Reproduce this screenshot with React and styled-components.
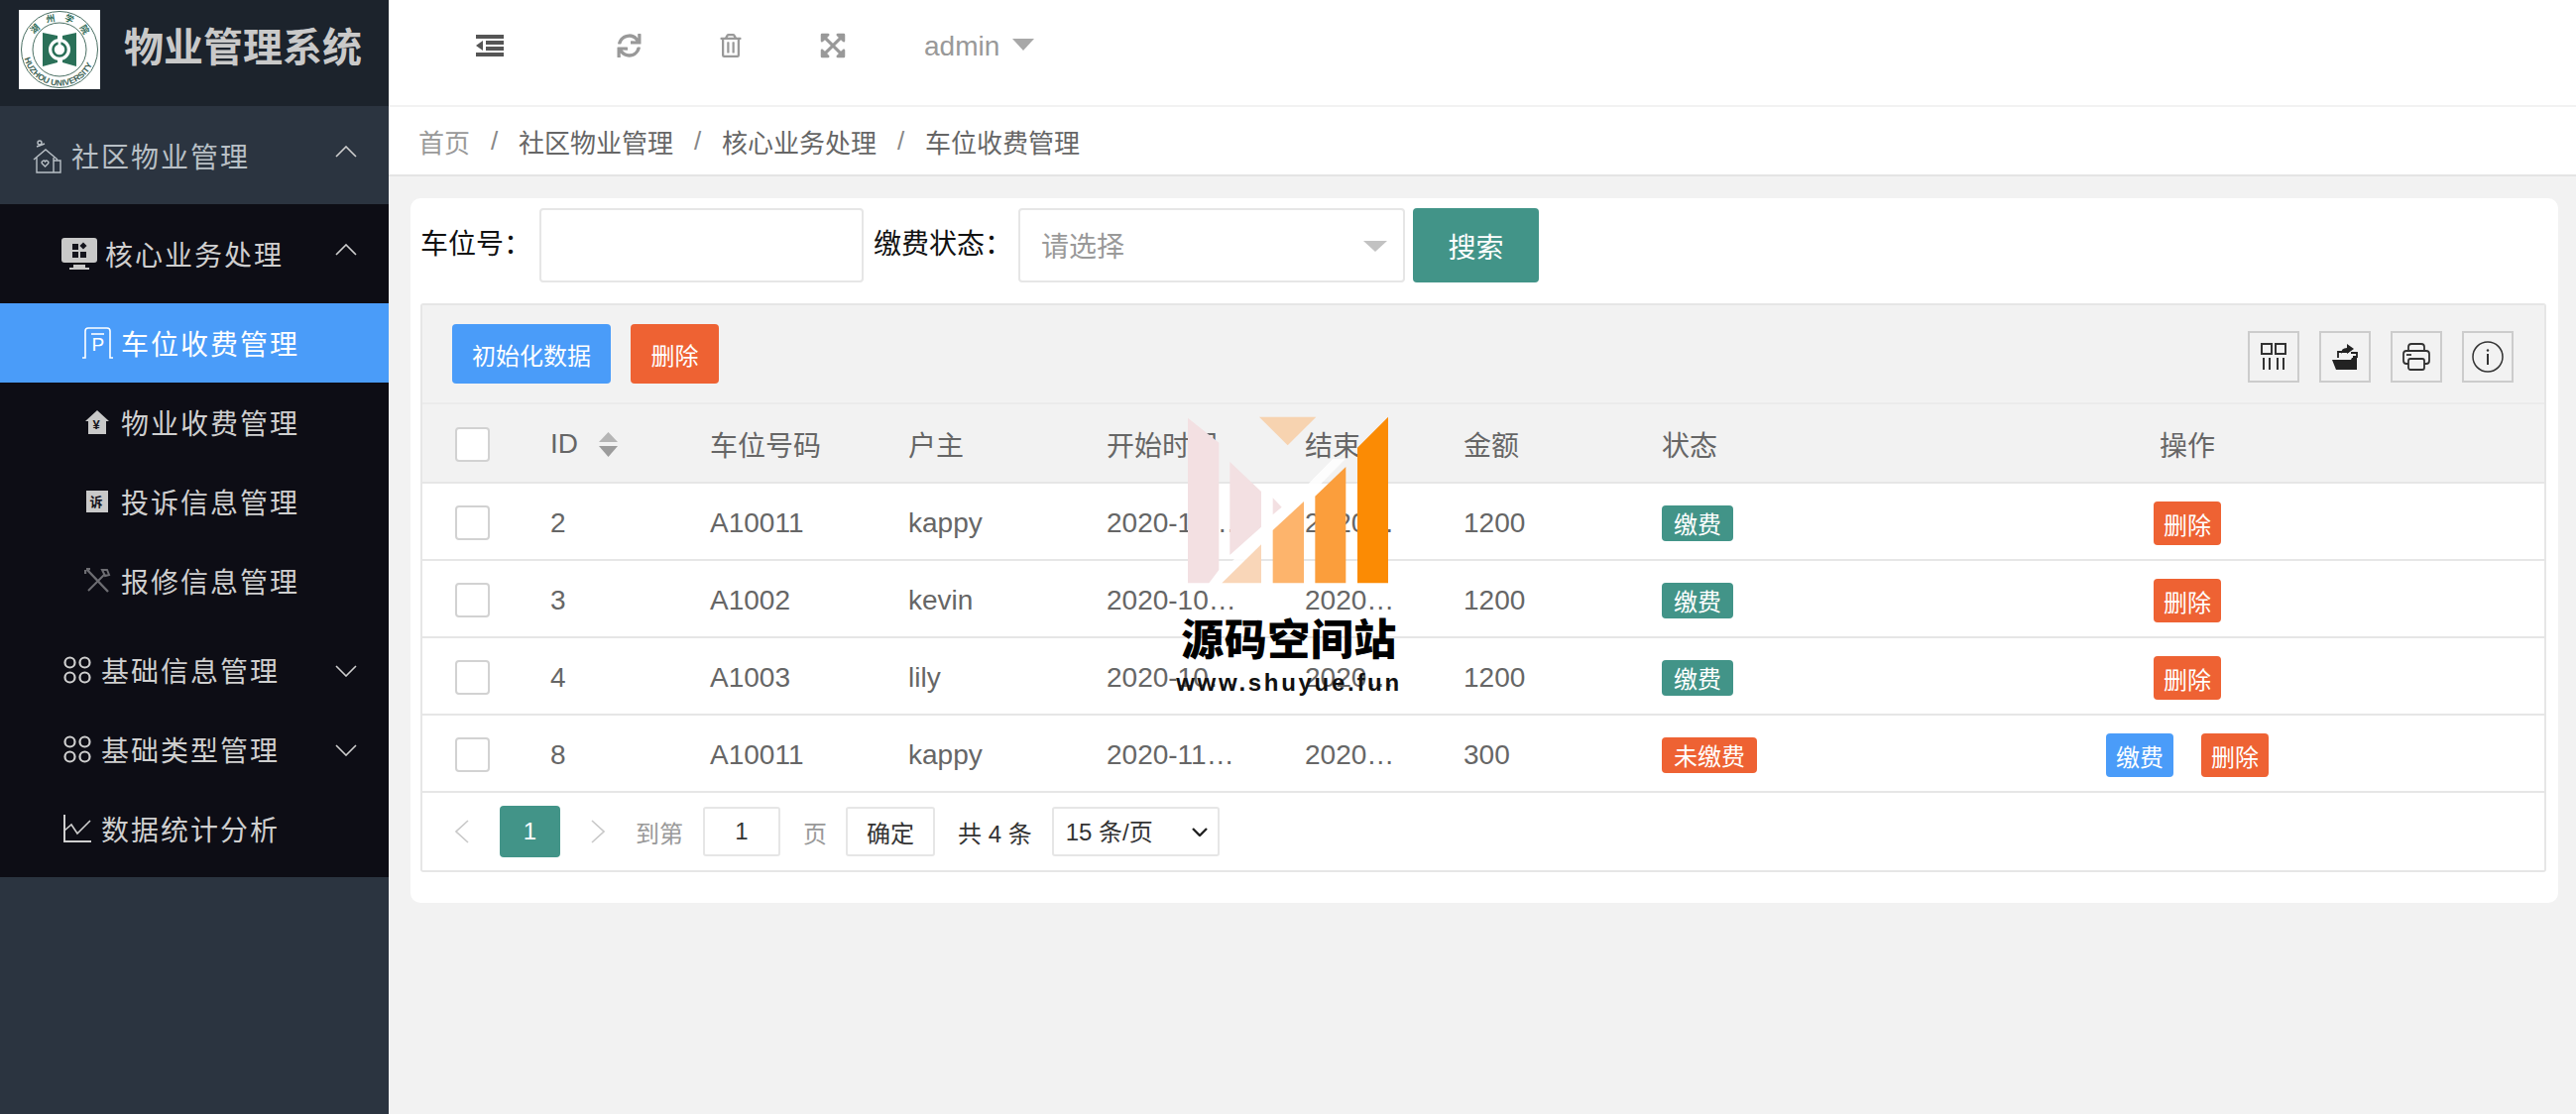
import React from 'react';
import styled, { createGlobalStyle } from 'styled-components';
import { FaSync, FaRegTrashAlt, FaExpandArrowsAlt } from 'react-icons/fa';

const rows = [
  { id: 2, code: 'A10011', owner: 'kappy', start: '2020-10-11 12:00:00', end: '2020-10-18 12:00:00', money: 1200, paid: true },
  { id: 3, code: 'A1002', owner: 'kevin', start: '2020-10-11 12:00:00', end: '2020-10-18 12:00:00', money: 1200, paid: true },
  { id: 4, code: 'A1003', owner: 'lily', start: '2020-10-11 12:00:00', end: '2020-10-18 12:00:00', money: 1200, paid: true },
  { id: 8, code: 'A10011', owner: 'kappy', start: '2020-11-02 12:00:00', end: '2020-11-09 12:00:00', money: 300, paid: false },
];

const Chevron = ({ up }) => (
  <ChevronSvg viewBox="0 0 22 12" $up={up}>
    <polyline points={up ? '1,11 11,1 21,11' : '1,1 11,11 21,1'} />
  </ChevronSvg>
);

const SchoolLogo = () => (
  <svg viewBox="0 0 82 80" width="82" height="80">
    <rect width="82" height="80" fill="#fff" />
    <defs>
      <path id="ringTop" d="M12 40 A29 29 0 0 1 70 40" />
      <path id="ringBottom" d="M4.5 40 A36.5 36.5 0 0 0 77.5 40" />
    </defs>
    <circle cx="41" cy="40" r="38.5" fill="none" stroke="#4a6f63" strokeWidth="1" />
    <circle cx="41" cy="40" r="27" fill="none" stroke="#4a6f63" strokeWidth="1" />
    <text fontFamily="Noto Sans CJK SC" fontSize="9" fontWeight="700" fill="#2f6b57" letterSpacing="8">
      <textPath href="#ringTop" startOffset="17%">湖州学院</textPath>
    </text>
    <text fontFamily="Liberation Sans" fontSize="8.5" fontWeight="700" fill="#3b5f54">
      <textPath href="#ringBottom" startOffset="8%">HUZHOU UNIVERSITY</textPath>
    </text>
    <path d="M24 23 L39 26 V53 L24 57 Z M44 26 L58 23 V57 L44 53 Z" fill="#2a7058" />
    <circle cx="41" cy="40" r="11" fill="#fff" />
    <circle cx="41" cy="40" r="6.5" fill="none" stroke="#2a7058" strokeWidth="2.6" />
    <rect x="39.6" y="30" width="2.8" height="6" fill="#fff" />
  </svg>
);

const HouseIcon = () => (
  <svg viewBox="0 0 29 36" width="29" height="36" fill="none" stroke="#b9c0c6" strokeWidth="1.4">
    <circle cx="7" cy="5" r="2" />
    <path d="M4 9 L12 6 M1 22 L13 12 L25 22 M4 20 V35 H28 V23 H21 M21 20 V35" />
    <path d="M12.5 29 L9.5 26 A1.8 1.8 0 0 1 12.5 24 A1.8 1.8 0 0 1 15.5 26 Z" />
  </svg>
);

const MonitorIcon = () => (
  <svg viewBox="0 0 36 32" width="36" height="32">
    <rect width="36" height="25" rx="3" fill="#c9c9c9" />
    <path d="M12 27 H24 V30 H28 V32 H8 V30 H12 Z" fill="#c9c9c9" />
    <rect x="11" y="6" width="6" height="6" fill="#14141c" />
    <rect x="11" y="14" width="6" height="6" fill="#14141c" />
    <rect x="19" y="14" width="6" height="6" fill="#14141c" />
    <rect x="19.5" y="5.5" width="5" height="5" fill="#14141c" transform="rotate(45 22 8)" />
  </svg>
);

const ParkingIcon = () => (
  <svg viewBox="0 0 32 32" width="32" height="32" fill="none" stroke="#fff" strokeWidth="1.6">
    <path d="M1 31 H4 V4 Q4 1 7 1 H26 Q29 1 29 4 V31 H32" />
    <path d="M10 7 H23" />
    <text x="10.5" y="24" fontFamily="Liberation Sans" fontSize="19" fill="#fff" stroke="none">P</text>
  </svg>
);

const FeeIcon = () => (
  <svg viewBox="0 0 26 26" width="26" height="26">
    <path d="M13 1 L25 12 H22 V25 H4 V12 H1 Z" fill="#c9c9c9" />
    <text x="13" y="20" textAnchor="middle" fontFamily="Liberation Sans" fontWeight="700" fontSize="13" fill="#14141c">¥</text>
  </svg>
);

const ComplaintIcon = () => (
  <svg viewBox="0 0 22 22" width="22" height="22">
    <rect width="22" height="22" fill="#c9c9c9" />
    <text x="11" y="16" textAnchor="middle" fontFamily="Noto Sans CJK SC" fontWeight="700" fontSize="13" fill="#14141c">诉</text>
  </svg>
);

const ToolsIcon = () => (
  <svg viewBox="0 0 27 26" width="27" height="26" fill="none" stroke="#6d6d72" strokeWidth="2.4">
    <path d="M3 2 L24 24 M2 1 L6 1 M1 2 L1 6" />
    <path d="M4 23 L21 6 M18 2 L23 2 L25 7 L21 8 Z" strokeWidth="2" />
  </svg>
);

const CirclesIcon = () => (
  <svg viewBox="0 0 28 28" width="28" height="28" fill="none" stroke="#cfcfcf" strokeWidth="2.2">
    <circle cx="6.5" cy="6.5" r="5" />
    <circle cx="21.5" cy="6.5" r="5" />
    <circle cx="6.5" cy="21.5" r="5" />
    <circle cx="21.5" cy="21.5" r="5" />
  </svg>
);

const ChartIcon = () => (
  <svg viewBox="0 0 28 28" width="28" height="28" fill="none" stroke="#cfcfcf" strokeWidth="2">
    <path d="M1 0 V27 H28" />
    <path d="M1 16 L8 10 L14 19 L27 6" strokeWidth="1.6" />
  </svg>
);

const OutdentIcon = () => (
  <svg viewBox="0 0 28 22" width="28" height="22" fill="#555">
    <rect width="28" height="4" />
    <rect x="10" y="6" width="18" height="4" />
    <rect x="10" y="12" width="18" height="4" />
    <rect y="18" width="28" height="4" />
    <polygon points="7,6 0,11 7,16" />
  </svg>
);

const ColumnsIcon = () => (
  <svg viewBox="0 0 26 28" width="26" height="28" fill="none" stroke="#333" strokeWidth="2">
    <rect x="1" y="1" width="10" height="10" />
    <rect x="15" y="1" width="10" height="10" />
    <path d="M3 15 V27 M9 15 V27 M17 15 V27 M23 15 V27" />
  </svg>
);

const ExportIcon = () => (
  <svg viewBox="0 0 26 28" width="26" height="28">
    <path d="M0 17 H19 L20 15 H25 V27 H4 Z" fill="#222" />
    <path d="M6 15 V9 H17 M19 10 H25 V14 H21" fill="none" stroke="#222" strokeWidth="1.8" />
    <path d="M9 11 Q9 5 15 5 V1 L22 6 L15 11 V8 Q11 8 9 11 Z" fill="#222" />
  </svg>
);

const PrintIcon = () => (
  <svg viewBox="0 0 28 28" width="28" height="28" fill="none" stroke="#333" strokeWidth="1.8">
    <path d="M6 8 V4 Q6 1 9 1 H19 Q22 1 22 4 V8" />
    <path d="M6 21 H4 Q1 21 1 18 V11 Q1 8 4 8 H24 Q27 8 27 11 V18 Q27 21 24 21 H22" />
    <rect x="6" y="16" width="16" height="11" rx="2" />
    <path d="M4 12 H9" />
  </svg>
);

const InfoIcon = () => (
  <svg viewBox="0 0 32 32" width="32" height="32" fill="none" stroke="#333" strokeWidth="1.5">
    <circle cx="16" cy="16" r="15" />
    <path d="M16 13 V24" strokeWidth="2" />
    <circle cx="16" cy="9.5" r="1.2" fill="#333" stroke="none" />
  </svg>
);

const SortIcon = () => (
  <svg viewBox="0 0 19 25" width="19" height="25">
    <path d="M9.5 0 L19 10 H0 Z" fill="#b5b5b5" />
    <path d="M0 14 H19 L9.5 25 Z" fill="#9c9c9c" />
  </svg>
);

const PageArrow = ({ left }) => (
  <PageArrowSvg viewBox="0 0 14 24" $left={left}>
    <polyline points={left ? '13,1 1,12 13,23' : '1,1 13,12 1,23'} />
  </PageArrowSvg>
);

const App = () => (
  <Page>
    <GlobalStyle />
    <Sidebar>
      <Brand>
        <SchoolLogo />
        <BrandTitle>物业管理系统</BrandTitle>
      </Brand>
      <Nav>
        <MenuRow $h={99} $indent={33} $bg="#2b3440" $color="#b9c0c6">
          <MenuIcon $w={29}><HouseIcon /></MenuIcon>
          社区物业管理
          <Chevron up />
        </MenuRow>
        <SubList>
          <MenuRow $h={100} $indent={62} $gap={8}>
            <MenuIcon $w={36}><MonitorIcon /></MenuIcon>
            核心业务处理
            <Chevron up />
          </MenuRow>
          <MenuRow $indent={82} $gap={8} $bg="#4a9cf9" $color="#fff">
            <MenuIcon $w={32}><ParkingIcon /></MenuIcon>
            车位收费管理
          </MenuRow>
          <MenuRow $indent={82} $gap={8}>
            <MenuIcon $w={32}><FeeIcon /></MenuIcon>
            物业收费管理
          </MenuRow>
          <MenuRow $indent={82} $gap={8}>
            <MenuIcon $w={32}><ComplaintIcon /></MenuIcon>
            投诉信息管理
          </MenuRow>
          <MenuRow $indent={82} $gap={8}>
            <MenuIcon $w={32}><ToolsIcon /></MenuIcon>
            报修信息管理
          </MenuRow>
        </SubList>
        <MenuRow $indent={64}>
          <MenuIcon $w={28}><CirclesIcon /></MenuIcon>
          基础信息管理
          <Chevron />
        </MenuRow>
        <MenuRow $indent={64}>
          <MenuIcon $w={28}><CirclesIcon /></MenuIcon>
          基础类型管理
          <Chevron />
        </MenuRow>
        <MenuRow $indent={64}>
          <MenuIcon $w={28}><ChartIcon /></MenuIcon>
          数据统计分析
        </MenuRow>
      </Nav>
    </Sidebar>

    <Main>
      <TopBar>
        <TopIcon $w={28} $ml={0} $color="#555"><OutdentIcon /></TopIcon>
        <TopIcon $w={25} $ml={114}><FaSync /></TopIcon>
        <TopIcon $w={22} $ml={79}><FaRegTrashAlt /></TopIcon>
        <TopIcon $w={24} $h={28} $ml={80}><FaExpandArrowsAlt /></TopIcon>
        <UserName>admin</UserName>
        <UserCaret />
      </TopBar>
      <Breadcrumb>
        <Crumb $color="#999">首页</Crumb>
        <CrumbSep>/</CrumbSep>
        <Crumb>社区物业管理</Crumb>
        <CrumbSep>/</CrumbSep>
        <Crumb>核心业务处理</Crumb>
        <CrumbSep>/</CrumbSep>
        <Crumb>车位收费管理</Crumb>
      </Breadcrumb>

      <Content>
        <Card>
          <SearchRow>
            <SearchLabel $w={120}>车位号：</SearchLabel>
            <SearchInput $w={327} />
            <SearchLabel $w={146} $ml={10}>缴费状态：</SearchLabel>
            <SelectBox>
              <SearchInput $w={390} placeholder="请选择" readOnly />
              <SelectCaret />
            </SelectBox>
            <SearchButton>搜索</SearchButton>
          </SearchRow>

          <TableFrame>
            <Toolbar>
              <ToolButton $bg="#4a9cf9" $w={160}>初始化数据</ToolButton>
              <ToolButton $bg="#ee6233" $w={89}>删除</ToolButton>
              <ToolRight>
                <IconBox><ColumnsIcon /></IconBox>
                <IconBox><ExportIcon /></IconBox>
                <IconBox><PrintIcon /></IconBox>
                <IconBox><InfoIcon /></IconBox>
              </ToolRight>
            </Toolbar>

            <DataTable>
              <colgroup>
                <col width="104" />
                <col width="161" />
                <col width="200" />
                <col width="200" />
                <col width="200" />
                <col width="160" />
                <col width="200" />
                <col width="195" />
                <col />
              </colgroup>
              <thead>
                <tr>
                  <HeadCell $first><Check type="checkbox" /></HeadCell>
                  <HeadCell><IdHead>ID<SortIcon /></IdHead></HeadCell>
                  <HeadCell>车位号码</HeadCell>
                  <HeadCell>户主</HeadCell>
                  <HeadCell>开始时间</HeadCell>
                  <HeadCell><Clip $w={95}>结束时间</Clip></HeadCell>
                  <HeadCell>金额</HeadCell>
                  <HeadCell>状态</HeadCell>
                  <HeadCell $center>操作</HeadCell>
                </tr>
              </thead>
              <tbody>
                {rows.map((row) => (
                  <tr key={row.id}>
                    <BodyCell $first><Check type="checkbox" /></BodyCell>
                    <BodyCell>{row.id}</BodyCell>
                    <BodyCell>{row.code}</BodyCell>
                    <BodyCell>{row.owner}</BodyCell>
                    <BodyCell><Clip $w={138}>{row.start}</Clip></BodyCell>
                    <BodyCell><Clip $w={95}>{row.end}</Clip></BodyCell>
                    <BodyCell>{row.money}</BodyCell>
                    <BodyCell>
                      <StatusTag $bg={row.paid ? '#429488' : '#ee6233'}>{row.paid ? '缴费' : '未缴费'}</StatusTag>
                    </BodyCell>
                    <BodyCell>
                      <Actions>
                        {!row.paid && <ActionButton $bg="#4a9cf9">缴费</ActionButton>}
                        <ActionButton $bg="#ee6233">删除</ActionButton>
                      </Actions>
                    </BodyCell>
                  </tr>
                ))}
              </tbody>
            </DataTable>

            <Pager>
              <PageArrow left />
              <PageCurrent>1</PageCurrent>
              <PageArrow />
              <PageText $ml={31} $color="#999">到第</PageText>
              <PageInput defaultValue="1" />
              <PageText $ml={23} $color="#999">页</PageText>
              <PageConfirm>确定</PageConfirm>
              <PageText $ml={23} $color="#333">共 4 条</PageText>
              <PageSelectBox>
                <PageSelect defaultValue="15">
                  <option value="15">15 条/页</option>
                  <option value="30">30 条/页</option>
                </PageSelect>
                <PageSelectArrow viewBox="0 0 16 9">
                  <polyline points="1,1 8,8 15,1" />
                </PageSelectArrow>
              </PageSelectBox>
            </Pager>
          </TableFrame>
        </Card>
      </Content>
    </Main>

    <Watermark>
      <WatermarkLogo viewBox="0 0 660 570">
        <polygon points="90,538 128,538 500,160 462,160" fill="#fff" fillOpacity="0.85" />
        <polygon points="24,35 118,110 118,495 88,535 24,535" fill="#f3e0e2" />
        <polygon points="151,168 246,258 246,365 151,450" fill="#f3e0e2" />
        <polygon points="281,277 308,305 281,328" fill="#f3e0e2" />
        <polygon points="240,32 412,32 326,118" fill="#f7d3b0" />
        <polygon points="127,535 246,535 246,418" fill="#f9d6b8" />
        <polygon points="281,375 375,288 375,535 281,535" fill="#fdb46c" />
        <polygon points="409,272 502,183 502,535 409,535" fill="#fb9e3c" />
        <polygon points="537,125 630,32 630,535 537,535" fill="#fb8b04" />
      </WatermarkLogo>
      <WatermarkTitle>源码空间站</WatermarkTitle>
      <WatermarkUrl>www.shuyue.fun</WatermarkUrl>
    </Watermark>
  </Page>
);

export default App;

const GlobalStyle = createGlobalStyle`
  * { box-sizing: border-box; }
  html, body { margin: 0; padding: 0; height: 100%; overflow: hidden; }
  body { font-family: "Liberation Sans", "Noto Sans CJK SC", sans-serif; }
  input, select, button { font-family: inherit; }
`;

const Page = styled.div`
  position: relative;
  display: flex;
  width: 100%;
  height: 100vh;
  background: #f2f2f2;
`;

const Sidebar = styled.aside`
  width: 392px;
  flex: none;
  background: #2b3440;
`;

const Brand = styled.div`
  display: flex;
  align-items: flex-start;
  height: 107px;
  padding: 10px 0 0 19px;
  background: #1c232c;
`;

const BrandTitle = styled.div`
  margin: 14px 0 0 24px;
  font-size: 40px;
  line-height: 48px;
  font-weight: 700;
  color: #c9c9c9;
`;

const Nav = styled.nav`
  padding-bottom: 9px;
  background: #0d0d15;
`;

const SubList = styled.div`
  padding-bottom: 10px;
`;

const MenuRow = styled.div`
  display: flex;
  align-items: center;
  height: ${(p) => p.$h || 80}px;
  padding: 0 32px 0 ${(p) => p.$indent}px;
  gap: ${(p) => p.$gap || 10}px;
  background: ${(p) => p.$bg || 'transparent'};
  color: ${(p) => p.$color || '#cfcfcf'};
  font-size: 28px;
  letter-spacing: 2px;
`;

const MenuIcon = styled.span`
  display: flex;
  align-items: center;
  justify-content: center;
  width: ${(p) => p.$w}px;
  flex: none;
`;

const ChevronSvg = styled.svg`
  width: 22px;
  height: 12px;
  margin: ${(p) => (p.$up ? '-8px' : '2px')} 0 0 auto;
  fill: none;
  stroke: #cfcfcf;
  stroke-width: 1.6;
`;

const Main = styled.main`
  flex: 1;
  min-width: 0;
  display: flex;
  flex-direction: column;
`;

const TopBar = styled.header`
  display: flex;
  align-items: center;
  height: 108px;
  padding: 0 0 14px 88px;
  background: #fff;
  border-bottom: 2px solid #f2f2f2;
`;

const TopIcon = styled.span`
  display: flex;
  justify-content: center;
  width: ${(p) => p.$w}px;
  margin-left: ${(p) => p.$ml}px;
  color: ${(p) => p.$color || '#999'};

  svg {
    flex: none;
    width: ${(p) => p.$h || p.$w}px;
    height: ${(p) => p.$h || 24}px;
  }
`;

const UserName = styled.span`
  margin-left: 80px;
  padding-top: 2px;
  font-size: 28px;
  color: #999;
`;

const UserCaret = styled.span`
  width: 0;
  height: 0;
  margin: -2px 0 0 13px;
  border-style: solid;
  border-width: 12px 11px 0;
  border-color: #a8a8a8 transparent transparent;
`;

const Breadcrumb = styled.nav`
  display: flex;
  align-items: center;
  height: 70px;
  padding: 0 0 0 30px;
  background: #fff;
  border-bottom: 2px solid #e4e4e4;
  font-size: 26px;
`;

const Crumb = styled.span`
  color: ${(p) => p.$color || '#666'};
`;

const CrumbSep = styled.span`
  width: 49px;
  text-align: center;
  color: #888;
`;

const Content = styled.div`
  flex: 1;
  padding: 22px 18px 0 22px;
`;

const Card = styled.section`
  padding: 10px 12px 31px 10px;
  background: #fff;
  border-radius: 10px;
`;

const SearchRow = styled.div`
  display: flex;
  align-items: center;
  height: 75px;
`;

const SearchLabel = styled.label`
  width: ${(p) => p.$w}px;
  margin-left: ${(p) => p.$ml || 0}px;
  padding-bottom: 8px;
  font-size: 28px;
  color: #111;
  white-space: nowrap;
`;

const SearchInput = styled.input`
  display: block;
  width: ${(p) => p.$w}px;
  height: 75px;
  padding: 5px 21px 0;
  border: 2px solid #e6e6e6;
  border-radius: 4px;
  background: #fff;
  font-size: 28px;
  outline: none;

  &::placeholder {
    color: #999;
  }
`;

const SelectBox = styled.div`
  position: relative;
`;

const SelectCaret = styled.span`
  position: absolute;
  top: 33px;
  right: 18px;
  width: 0;
  height: 0;
  border-style: solid;
  border-width: 11px 12px 0;
  border-color: #c2c2c2 transparent transparent;
`;

const SearchButton = styled.button`
  width: 127px;
  height: 75px;
  margin-left: 8px;
  border: none;
  border-radius: 4px;
  background: #429488;
  color: #fff;
  font-size: 28px;
`;

const TableFrame = styled.div`
  margin-top: 21px;
  border: 2px solid #e6e6e6;
  border-radius: 3px;
`;

const Toolbar = styled.div`
  display: flex;
  align-items: center;
  gap: 20px;
  height: 100px;
  padding: 0 31px 0 30px;
  background: #f2f2f2;
  border-bottom: 2px solid #ebebeb;
`;

const ToolButton = styled.button`
  width: ${(p) => p.$w}px;
  height: 60px;
  border: none;
  border-radius: 4px;
  background: ${(p) => p.$bg};
  color: #fff;
  font-size: 24px;
`;

const ToolRight = styled.div`
  display: flex;
  gap: 20px;
  margin: 5px 0 0 auto;
`;

const IconBox = styled.span`
  display: flex;
  align-items: center;
  justify-content: center;
  width: 52px;
  height: 52px;
  border: 2px solid #ccc;
`;

const DataTable = styled.table`
  width: 100%;
  table-layout: fixed;
  border-collapse: collapse;
`;

const HeadCell = styled.th`
  height: 79px;
  padding: ${(p) => (p.$first ? 0 : 2)}px ${(p) => (p.$first ? 0 : 25)}px 0 ${(p) => (p.$first ? 33 : 25)}px;
  background: #f2f2f2;
  border-bottom: 2px solid #e6e6e6;
  font-size: 28px;
  font-weight: 400;
  color: #666;
  text-align: ${(p) => (p.$center ? 'center' : 'left')};
  white-space: nowrap;
  overflow: hidden;
`;

const BodyCell = styled.td`
  height: 78px;
  padding: ${(p) => (p.$first ? 0 : 3)}px ${(p) => (p.$first ? 0 : 25)}px 0 ${(p) => (p.$first ? 33 : 25)}px;
  background: #fff;
  border-bottom: 2px solid #e6e6e6;
  font-size: 28px;
  color: #666;
`;

const IdHead = styled.span`
  display: inline-flex;
  align-items: center;
  gap: 21px;
`;

const Check = styled.input`
  appearance: none;
  display: block;
  width: 35px;
  height: 35px;
  margin: 2px 0 0;
  border: 2px solid #d2d2d2;
  border-radius: 4px;
  background: #fff;
`;

const Clip = styled.div`
  width: ${(p) => p.$w}px;
  overflow: hidden;
  text-overflow: ellipsis;
  white-space: nowrap;
`;

const StatusTag = styled.span`
  display: inline-flex;
  align-items: center;
  height: 36px;
  padding: 0 12px;
  border-radius: 4px;
  background: ${(p) => p.$bg};
  color: #fff;
  font-size: 24px;
`;

const Actions = styled.div`
  display: flex;
  justify-content: center;
  gap: 28px;
  padding-top: 1px;
`;

const ActionButton = styled.button`
  width: 68px;
  height: 44px;
  padding: 0;
  border: none;
  border-radius: 4px;
  background: ${(p) => p.$bg};
  color: #fff;
  font-size: 24px;
`;

const Pager = styled.div`
  display: flex;
  align-items: center;
  height: 78px;
  padding-left: 33px;
  background: #fff;
  font-size: 24px;
`;

const PageArrowSvg = styled.svg`
  width: 14px;
  height: 24px;
  margin: ${(p) => (p.$left ? '0 31px 0 0' : '0 0 0 31px')};
  fill: none;
  stroke: #c8c8c8;
  stroke-width: 1.6;
`;

const PageCurrent = styled.span`
  display: flex;
  align-items: center;
  justify-content: center;
  width: 61px;
  height: 52px;
  border-radius: 4px;
  background: #429488;
  color: #fff;
`;

const PageText = styled.span`
  margin-left: ${(p) => p.$ml}px;
  color: ${(p) => p.$color};
  white-space: nowrap;
`;

const PageInput = styled.input`
  width: 78px;
  height: 50px;
  margin-left: 20px;
  border: 2px solid #e6e6e6;
  border-radius: 3px;
  font-size: 24px;
  color: #333;
  text-align: center;
  outline: none;
`;

const PageConfirm = styled.button`
  width: 90px;
  height: 50px;
  margin-left: 19px;
  padding: 0;
  border: 2px solid #e6e6e6;
  border-radius: 3px;
  background: #fff;
  color: #333;
  font-size: 24px;
`;

const PageSelectBox = styled.div`
  position: relative;
  margin-left: 20px;
`;

const PageSelect = styled.select`
  appearance: none;
  display: block;
  width: 169px;
  height: 50px;
  padding-left: 12px;
  border: 2px solid #e6e6e6;
  border-radius: 3px;
  background: #fff;
  color: #333;
  font-size: 24px;
  outline: none;
`;

const PageSelectArrow = styled.svg`
  position: absolute;
  top: 21px;
  right: 12px;
  width: 16px;
  height: 9px;
  fill: none;
  stroke: #222;
  stroke-width: 2.4;
`;

const Watermark = styled.div`
  position: absolute;
  left: 1187px;
  top: 410px;
  width: 226px;
  display: flex;
  flex-direction: column;
  align-items: center;
  pointer-events: none;
`;

const WatermarkLogo = styled.svg`
  display: block;
  width: 220px;
  height: 190px;
  margin-left: 3px;
  align-self: flex-start;
`;

const WatermarkTitle = styled.div`
  margin-top: 21px;
  font-size: 43px;
  line-height: 50px;
  font-weight: 900;
  letter-spacing: 0.5px;
  color: #000;
  white-space: nowrap;
`;

const WatermarkUrl = styled.div`
  margin-top: 4px;
  font-size: 24px;
  line-height: 28px;
  font-weight: 700;
  letter-spacing: 2.7px;
  color: #111;
  white-space: nowrap;
`;
